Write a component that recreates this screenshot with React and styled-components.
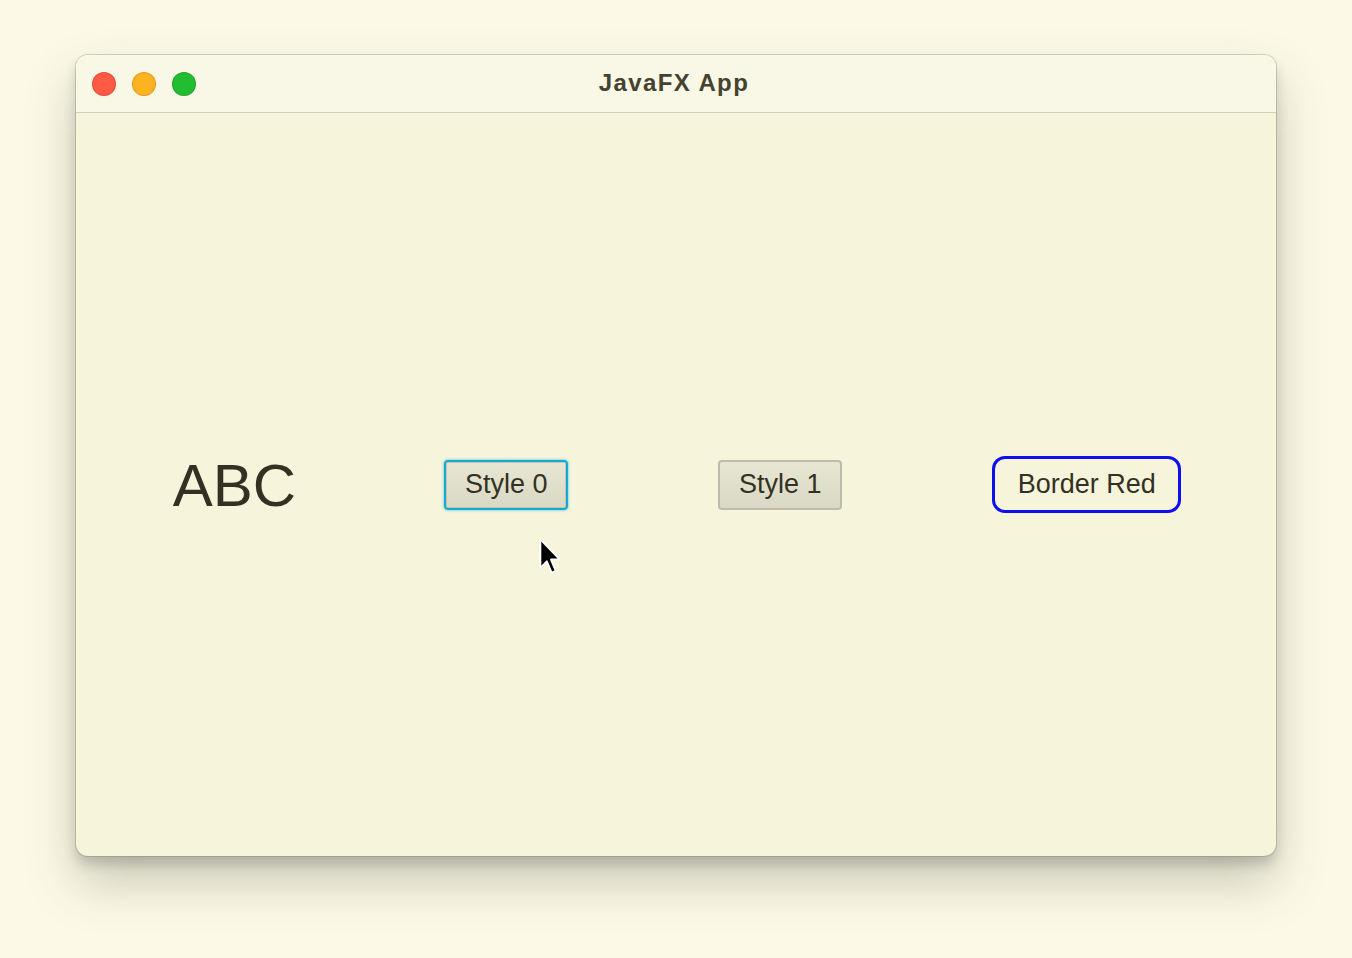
import React from 'react';
import styled, { createGlobalStyle } from 'styled-components';

const Global = createGlobalStyle`
    html, body {
        margin: 0;
        padding: 0;
        background: #fcfae6;
    }
    body {
        font-family: "Liberation Sans", Arial, sans-serif;
    }
`;

const Page = styled.div`
    width: 1352px;
    height: 958px;
    box-sizing: border-box;
    padding: 55px 76px 0 76px;
    display: flex;
    align-items: flex-start;
    justify-content: center;
`;

const Window = styled.div`
    width: 1200px;
    height: 801px;
    border-radius: 12px;
    background: #f6f4da;
    display: flex;
    flex-direction: column;
    overflow: hidden;
    box-shadow:
        0 0 0 1px rgba(120, 118, 100, 0.3),
        0 8px 12px rgba(60, 60, 60, 0.22),
        0 26px 50px rgba(60, 60, 50, 0.26);
`;

const TitleBar = styled.div`
    position: relative;
    height: 57px;
    flex-shrink: 0;
    background: #f9f7e6;
    border-bottom: 1px solid #d2d0c0;
    display: flex;
    align-items: center;
    justify-content: center;
`;

const Lights = styled.div`
    position: absolute;
    left: 16px;
    top: 17px;
    display: flex;
    gap: 16px;
`;

const Light = styled.span`
    width: 24px;
    height: 24px;
    border-radius: 50%;
    background: ${p => p.color};
    box-shadow: inset 0 0 0 1px rgba(0, 0, 0, 0.12);
`;

const Title = styled.div`
    font-weight: bold;
    font-size: 24px;
    letter-spacing: 1.4px;
    color: #45432f;
    margin-top: -1px;
    margin-left: -4px;
`;

const Content = styled.div`
    position: relative;
    flex: 1;
    display: flex;
    align-items: center;
    justify-content: center;
    gap: 150px;
    padding-left: 2px;
`;

const Big = styled.div`
    font-size: 60px;
    color: #333124;
    line-height: 1;
    margin-top: 2px;
    margin-right: -2px;
`;

const Btn = styled.button`
    font-family: "Liberation Sans", Arial, sans-serif;
    font-size: 27px;
    color: #333124;
    box-sizing: border-box;
    height: ${p => p.h || 50}px;
    width: ${p => p.w}px;
    padding: 0;
    border-radius: ${p => p.r || 4}px;
    border: ${p => p.border};
    background: ${p => p.bg || 'linear-gradient(#e8e7d3, #d9d8c4)'};
    box-shadow: ${p => p.shadow || 'none'};
    outline: none;
    cursor: default;
`;

const Cursor = styled.svg`
    position: absolute;
    left: 462px;
    top: 424px;
`;

export default function App() {
    return (
        <Page>
            <Global />
            <Window>
                <TitleBar>
                    <Lights>
                        <Light color="#fe5a45" />
                        <Light color="#fdb321" />
                        <Light color="#22bd31" />
                    </Lights>
                    <Title>JavaFX App</Title>
                </TitleBar>
                <Content>
                    <Big>ABC</Big>
                    <Btn
                        w={124}
                        border="2px solid #16a9d4"
                        shadow="0 0 2px 1px rgba(40, 190, 230, 0.45), inset 0 0 0 1px rgba(170, 170, 150, 0.5)"
                    >
                        Style 0
                    </Btn>
                    <Btn w={124} border="2px solid #bdbcac">Style 1</Btn>
                    <Btn
                        w={189}
                        h={57}
                        r={13}
                        border="3px solid #0d0ff0"
                        bg="transparent"
                    >
                        Border Red
                    </Btn>
                    <Cursor width="26" height="38" viewBox="0 0 22 32">
                        <path
                            d="M2 2 L2 26 L7.5 20.5 L11.5 30 L15 28.5 L11 19 L18.5 19 Z"
                            fill="#000"
                            stroke="#fff"
                            strokeWidth="1.6"
                            strokeLinejoin="round"
                        />
                    </Cursor>
                </Content>
            </Window>
        </Page>
    );
}
